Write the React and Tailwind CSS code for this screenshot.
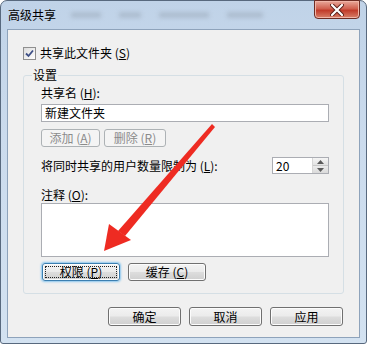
import React from 'react';

const FONT = { fontFamily: '"Noto Sans CJK SC", "Noto Sans", sans-serif' };

const BTN_BG =
  'bg-[linear-gradient(to_bottom,#f3f3f3_0%,#ebebeb_48%,#dddddd_52%,#cfcfcf_100%)]';

function Button({ children, className = '', focused = false, disabled = false }) {
  if (disabled) {
    return (
      <div
        className={`h-[18px] flex items-center justify-center rounded-[3px] border border-[#adb2b5] bg-[#f4f4f4] text-[12px] leading-none text-[#8b8b8b] ${className}`}
      >
        {children}
      </div>
    );
  }
  return (
    <div
      className={`flex items-center justify-center rounded-[3px] border ${
        focused
          ? 'border-[#3c7fb1] shadow-[0_0_2px_1px_#8cc7ee,inset_0_0_0_1px_#fcfcfc]'
          : 'border-[#707070] shadow-[inset_0_0_0_1px_#fcfcfc]'
      } ${BTN_BG} text-[12px] leading-none text-black ${className}`}
    >
      {focused ? (
        <span className="flex h-[calc(100%-4px)] w-[calc(100%-4px)] items-center justify-center border border-dotted border-[#222]">
          {children}
        </span>
      ) : (
        children
      )}
    </div>
  );
}

function Checkbox() {
  return (
    <div className="w-[13px] h-[13px] border border-[#8f8f8f] bg-[linear-gradient(135deg,#dcdcdc,#ffffff)] flex items-center justify-center">
      <svg width="9" height="9" viewBox="0 0 9 9">
        <path d="M1 4.5 L3.5 7 L8 1.5" fill="none" stroke="#3d4f86" strokeWidth="1.8" />
      </svg>
    </div>
  );
}

function Spin() {
  return (
    <div className="w-[57px] h-[17px] border border-[#abadb3] bg-white flex">
      <div className="flex-1 pl-[3px] text-[12px] leading-[15px]">20</div>
      <div className="w-[16px] flex flex-col border-l border-[#d6d6d6]">
        <div className="flex-1 flex items-center justify-center bg-[linear-gradient(to_bottom,#f5f5f5,#e2e2e2)] border-b border-[#c8c8c8]">
          <svg width="7" height="4" viewBox="0 0 7 4">
            <path d="M0 4 L3.5 0 L7 4 Z" fill="#5a5a5a" />
          </svg>
        </div>
        <div className="flex-1 flex items-center justify-center bg-[linear-gradient(to_bottom,#ececec,#dadada)]">
          <svg width="7" height="4" viewBox="0 0 7 4">
            <path d="M0 0 L7 0 L3.5 4 Z" fill="#5a5a5a" />
          </svg>
        </div>
      </div>
    </div>
  );
}

function Arrow() {
  return (
    <svg className="absolute inset-0 pointer-events-none" width="367" height="344" viewBox="0 0 367 344">
      <path d="M212 124 L215 127 L125 236 L118 231 Z" fill="#ee2b22" />
      <path d="M104 251 L109 224 L131 240 Z" fill="#ee2b22" />
    </svg>
  );
}

export default function App() {
  return (
    <div className="relative w-[367px] h-[344px] overflow-hidden bg-white" style={FONT}>
      <div className="h-full flex flex-col rounded-t-[7px] rounded-b-[3px] border border-[#58697e] bg-[linear-gradient(to_bottom,#c0d3e8,#cbdbed_40%,#d3e2f1)]">
        {/* Title bar */}
        <div className="relative h-[28px] shrink-0 flex items-start">
          <div className="flex gap-[18px] items-center h-[28px] pl-[70px] blur-[2px] opacity-50">
            <div className="w-[30px] h-[6px] bg-[#9aa8b8]" />
            <div className="w-[22px] h-[6px] bg-[#9aa8b8]" />
            <div className="w-[50px] h-[6px] bg-[#9aa8b8]" />
            <div className="w-[36px] h-[6px] bg-[#9aa8b8]" />
          </div>
          <div className="absolute left-[7px] top-[6px] text-[12px] leading-[16px] text-black">高级共享</div>
          <div className="ml-auto mr-[6px] -mt-px w-[46px] h-[19px] rounded-b-[4px] border border-[#6e2c24] bg-[linear-gradient(to_bottom,#e9a99b,#d0604f_45%,#c13b2a_55%,#d8806a)] shadow-[inset_0_0_0_1px_#f0b5a8] flex items-center justify-center">
            <svg width="14" height="12" viewBox="0 0 14 12">
              <path d="M2 1 L12 11 M12 1 L2 11" stroke="#5a1e18" strokeWidth="4" strokeLinecap="round" />
              <path d="M2 1 L12 11 M12 1 L2 11" stroke="#ffffff" strokeWidth="2.2" strokeLinecap="round" />
            </svg>
          </div>
        </div>

        {/* Client area */}
        <div className="flex-1 mx-[6px] mb-[5px] border border-[#8ea3bb] bg-[#f0f0f0] flex flex-col">
          <div className="mt-[16px] pl-[15px] flex items-center gap-[4px] h-[14px]">
            <Checkbox />
            <span className="text-[12px] leading-none">共享此文件夹 (<u>S</u>)</span>
          </div>

          <fieldset className="mt-[7px] ml-[15px] w-[321px] border border-[#d5dfe5] rounded-[3px] pl-[17px] pr-[14px] pb-[12px]">
            <legend className="-ml-[9px] px-[1px] text-[12px] leading-[16px]">设置</legend>
            <div className="mt-[2px] text-[12px] leading-[16px]">共享名 (<u>H</u>):</div>
            <div className="mt-[3px] w-[288px] h-[18px] border border-[#abadb3] bg-white pl-[3px] text-[12px] leading-[16px]">
              新建文件夹
            </div>
            <div className="mt-[7px] flex gap-[4px]">
              <Button disabled className="w-[59px]">添加 (<u>A</u>)</Button>
              <Button disabled className="w-[62px]">删除 (<u>R</u>)</Button>
            </div>
            <div className="mt-[10px] flex items-center justify-between w-[288px]">
              <span className="text-[12px] leading-none">将同时共享的用户数量限制为 (<u>L</u>):</span>
              <Spin />
            </div>
            <div className="mt-[13px] text-[12px] leading-[16px]">注释 (<u>O</u>):</div>
            <div className="w-[288px] h-[54px] border border-[#abadb3] bg-white" />
            <div className="mt-[6px] flex gap-[8px] pl-px">
              <Button focused className="w-[78px] h-[18px]">权限 (<u>P</u>)</Button>
              <Button className="w-[78px] h-[18px]">缓存 (<u>C</u>)</Button>
            </div>
          </fieldset>

          <div className="mt-[13px] pr-[16px] flex justify-end gap-[8px]">
            <Button className="w-[73px] h-[19px]">确定</Button>
            <Button className="w-[73px] h-[19px]">取消</Button>
            <Button className="w-[73px] h-[19px]">应用</Button>
          </div>
        </div>
      </div>
      <Arrow />
    </div>
  );
}
